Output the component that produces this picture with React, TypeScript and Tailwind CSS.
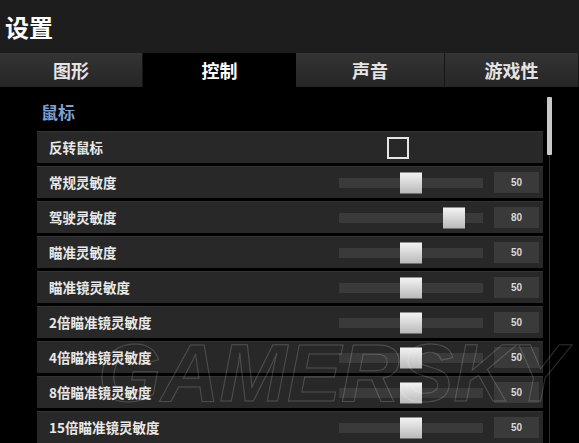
import React from "react";

/* ----------------------------------
   DATA
---------------------------------- */
const TABS = ["图形", "控制", "声音", "游戏性"];
const ACTIVE_TAB = 1;

type Row =
  | { label: string; kind: "check" }
  | { label: string; kind: "slider"; value: number };

const ROWS: Row[] = [
  { label: "反转鼠标", kind: "check" },
  { label: "常规灵敏度", kind: "slider", value: 50 },
  { label: "驾驶灵敏度", kind: "slider", value: 80 },
  { label: "瞄准灵敏度", kind: "slider", value: 50 },
  { label: "瞄准镜灵敏度", kind: "slider", value: 50 },
  { label: "2倍瞄准镜灵敏度", kind: "slider", value: 50 },
  { label: "4倍瞄准镜灵敏度", kind: "slider", value: 50 },
  { label: "8倍瞄准镜灵敏度", kind: "slider", value: 50 },
  { label: "15倍瞄准镜灵敏度", kind: "slider", value: 50 },
];

const FONT = "font-['Noto_Sans_CJK_SC','Noto_Sans',sans-serif]";

/* ----------------------------------
   PARTS
---------------------------------- */
function Slider({ value }: { value: number }) {
  return (
    <div className="relative w-[144px] h-[10px] bg-[#3a3a3a]">
      <div
        className="absolute top-1/2 -translate-y-1/2 w-[22px] h-[21px] bg-gradient-to-b from-[#f4f4f4] to-[#b9b9b9]"
        style={{ left: `calc(${value}% - 11px)` }}
      />
    </div>
  );
}

function SettingRow({ row }: { row: Row }) {
  return (
    <div className="flex items-center w-[506px] h-[32px] mb-[3px] bg-[#282828] border-t border-[#333]">
      <div className="w-[302px] shrink-0 pl-[12px] text-[13.5px] font-bold text-[#e8e8e8] leading-none">
        {row.label}
      </div>
      {row.kind === "check" ? (
        <div className="ml-[48px] w-[22px] h-[22px] border-2 border-[#e6e6e6]" />
      ) : (
        <>
          <Slider value={row.value} />
          <div className="ml-[11px] w-[45px] h-[21px] bg-[#3a3a3a] flex items-center justify-center text-[10px] font-bold text-[#d8d8d8] font-['Liberation_Sans_Narrow','Liberation_Sans',sans-serif]">
            {row.value}
          </div>
        </>
      )}
    </div>
  );
}

/* ----------------------------------
   APP
---------------------------------- */
export default function App() {
  return (
    <div className={`relative w-[579px] h-[443px] overflow-hidden bg-black ${FONT}`}>
      {/* header */}
      <div className="h-[53px] bg-[#1d1d1d] flex items-center pl-[5px]">
        <span className="text-[24px] font-bold text-white leading-none">设置</span>
      </div>

      {/* tabs */}
      <div className="grid grid-cols-[143px_153px_149px_1fr] h-[34px]">
        {TABS.map((t, i) => (
          <div
            key={t}
            className={`flex items-center justify-center text-[18px] font-bold leading-none ${
              i === ACTIVE_TAB
                ? "bg-black text-white"
                : "bg-gradient-to-b from-[#343434] to-[#262626] text-[#e4e4e4] border-r border-[#151515]"
            }`}
          >
            {t}
          </div>
        ))}
      </div>

      {/* content */}
      <div className="relative pl-[37px] pt-[16px]">
        <div className="pl-[4px] text-[17px] font-bold text-[#7f9fd0] leading-none h-[28px]">
          鼠标
        </div>
        {ROWS.map((r) => (
          <SettingRow key={r.label} row={r} />
        ))}

        {/* scrollbar */}
        <div className="absolute left-[549px] top-[64px] bottom-0 w-px bg-[#2a2a2a]" />
        <div className="absolute left-[547px] top-[10px] w-[5px] h-[58px] bg-[#c9c9c9] rounded-[1px]" />
      </div>

      {/* watermark */}
      <div className="absolute left-[98px] top-[333px] text-[81px] leading-none font-bold italic font-['Liberation_Sans',sans-serif] text-transparent [-webkit-text-stroke:1px_rgba(255,255,255,0.18)] pointer-events-none select-none">
        GAMERSKY
      </div>
    </div>
  );
}
